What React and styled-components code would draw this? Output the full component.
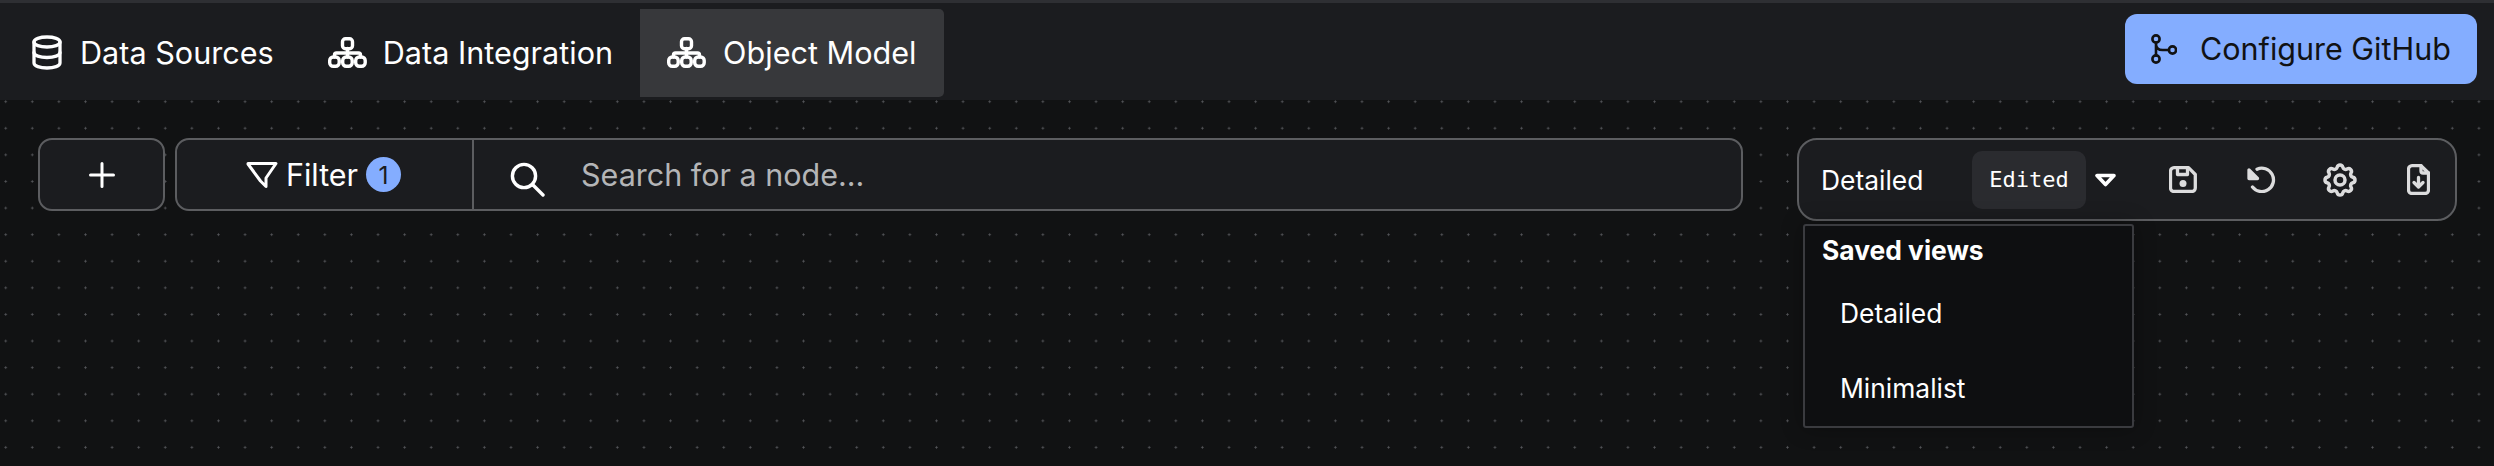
import React from 'react';
import styled, { createGlobalStyle } from 'styled-components';
import { TbSettings } from 'react-icons/tb';

const GlobalStyle = createGlobalStyle`
  html, body {
    margin: 0;
    padding: 0;
    background: #111213;
  }
  * {
    box-sizing: border-box;
  }
`;

const Page = styled.div`
  width: 2494px;
  height: 466px;
  overflow: hidden;
  position: relative;
  display: flex;
  flex-direction: column;
  font-family: Inter, sans-serif;
  color: #fff;
  background-color: #111213;
  background-image: radial-gradient(circle at center, #55565a 0.9px, transparent 1.2px);
  background-size: 26.6px 26.6px;
  background-position: -7.6px 5.6px;
  border-top: 3px solid #2e2f33;
`;

const Header = styled.header`
  height: 97px;
  flex-shrink: 0;
  display: flex;
  justify-content: space-between;
  align-items: flex-start;
  padding: 6px 17px 0 5px;
  background: #1b1c1f;
`;

const Tabs = styled.nav`
  display: flex;
`;

const Tab = styled.div`
  height: 88px;
  display: flex;
  align-items: center;
  gap: ${(p) => p.$gap || 17}px;
  padding: 0 27px 1px;
  font-size: 30.6px;
  border-radius: 0 5px 5px 0;
  background: ${(p) => (p.$active ? '#37383b' : 'transparent')};
`;

const GitHubButton = styled.button`
  width: 352px;
  height: 70px;
  margin-top: 5px;
  display: flex;
  align-items: center;
  gap: 23px;
  padding: 0 0 1px 26px;
  border: none;
  border-radius: 12px;
  background: #84adff;
  color: #111213;
  font-family: inherit;
  font-size: 30.5px;
`;

const Toolbar = styled.div`
  display: flex;
  justify-content: space-between;
  padding: 38px 37px 0 38px;
`;

const LeftTools = styled.div`
  display: flex;
  gap: 10px;
  height: 73px;
`;

const AddButton = styled.div`
  width: 127px;
  display: flex;
  align-items: center;
  justify-content: center;
  background: #1b1c1f;
  border: 2px solid #5c5d60;
  border-radius: 14px;
`;

const SearchGroup = styled.div`
  width: 1568px;
  display: flex;
  background: #1b1c1f;
  border: 2px solid #5c5d60;
  border-radius: 14px;
`;

const FilterPart = styled.div`
  width: 297px;
  display: flex;
  align-items: center;
  justify-content: center;
  gap: 8px;
  padding-right: 2px;
  border-right: 2px solid #5c5d60;
  font-size: 30.5px;
`;

const Badge = styled.span`
  width: 35px;
  height: 35px;
  display: flex;
  align-items: center;
  justify-content: center;
  border-radius: 50%;
  background: #84adff;
  color: #1b1c1f;
  font-size: 24.6px;
`;

const SearchPart = styled.div`
  flex: 1;
  display: flex;
  align-items: center;
  gap: 36px;
  padding-left: 36px;
  color: #b4b5b7;
  font-size: 30.5px;
  svg {
    margin-top: 10px;
    color: #fff;
  }
`;

const ViewPanel = styled.div`
  width: 660px;
  height: 83px;
  position: relative;
  display: flex;
  align-items: center;
  padding-left: 22px;
  background: #1b1c1f;
  border: 2px solid #5c5d60;
  border-radius: 20px;
  font-size: 26.4px;
`;

const ViewName = styled.span`
  flex: 0 0 151px;
`;

const EditedTag = styled.span`
  flex: 0 0 114px;
  height: 58px;
  display: flex;
  align-items: center;
  justify-content: center;
  border-radius: 10px;
  background: #2a2b2f;
  font-family: 'DejaVu Sans Mono', monospace;
  font-size: 22px;
`;

const CaretBox = styled.span`
  flex: 0 0 39px;
  display: flex;
  justify-content: center;
`;

const IconRow = styled.div`
  display: flex;
  flex-shrink: 0;
  margin-left: 19px;
  color: #dcdcdd;
`;

const IconCell = styled.span`
  flex: 0 0 78.5px;
  display: flex;
  align-items: center;
  justify-content: center;
  svg.gear {
    width: 40px;
    height: 40px;
    stroke-width: 2.1;
  }
`;

const Dropdown = styled.div`
  position: absolute;
  top: 84px;
  left: 4px;
  width: 331px;
  height: 204px;
  padding: 6px 17px;
  background: #0e0f11;
  border: 2px solid #3a3b3f;
  border-radius: 3px;
  box-shadow: 0 0 22px rgba(0, 0, 0, 0.3);
`;

const DropdownLabel = styled.div`
  font-weight: 700;
  line-height: 36px;
  margin-bottom: 21px;
`;

const DropdownItem = styled.div`
  height: 75px;
  padding: 6px 18px;
  line-height: 36px;
`;

const Line = styled.svg`
  display: block;
  flex-shrink: 0;
  fill: none;
  stroke: currentColor;
  stroke-width: ${(p) => p.$weight || 3.3};
  stroke-linecap: round;
  stroke-linejoin: round;
`;

const DatabaseIcon = () => (
  <Line width="30" height="35" viewBox="0 0 30 35">
    <path d="M2 7c0-3 6-5 13-5s13 2 13 5-6 5-13 5S2 10 2 7" />
    <path d="M2 7v21c0 3 6 5 13 5s13-2 13-5V7" />
    <path d="M2 17.5c0 3 6 5 13 5s13-2 13-5" />
  </Line>
);

const SitemapIcon = () => (
  <Line width="39" height="31" viewBox="0 0 39 31" $weight={3.4}>
    <rect x="14.5" y="1.7" width="10" height="10" rx="3" />
    <rect x="1.7" y="20" width="9.5" height="9.3" rx="3.5" />
    <rect x="14.7" y="20" width="9.500" height="9.3" rx="3.5" />
    <rect x="27.7" y="20" width="9.500" height="9.3" rx="3.5" />
    <path d="M19.500 11.500V20M6.500 20v-2a2 2 0 0 1 2-2h22a2 2 0 0 1 2 2v2" />
  </Line>
);

const BranchIcon = () => (
  <Line width="26" height="30" viewBox="0 0 26 30" $weight={2.6}>
    <circle cx="5" cy="5" r="3.6" />
    <circle cx="5" cy="25" r="3.6" />
    <circle cx="21.5" cy="16" r="3.6" />
    <path d="M5 8.600v12.800M18 16h-6.500Q5 16 5 10" />
  </Line>
);

const PlusIcon = () => (
  <Line width="26" height="26" viewBox="0 0 26 26" $weight={3}>
    <path d="M13 1.500v23M1.500 13h23" />
  </Line>
);

const FilterIcon = () => (
  <Line width="32" height="28" viewBox="0 0 32 28" $weight={3}>
    <path d="M2 2.500h28L20 17v8.500l-5.500-5.500L2 3z" />
  </Line>
);

const SearchIcon = () => (
  <Line width="35" height="35" viewBox="0 0 35 35" $weight={3.4}>
    <circle cx="14" cy="14" r="11.600" />
    <path d="M23 23l10 10" />
  </Line>
);

const CaretIcon = () => (
  <Line width="23" height="14" viewBox="0 0 23 14" $weight={3.6}>
    <path d="M3 2.500h17l-8.500 9z" />
  </Line>
);

const SaveIcon = () => (
  <Line width="28" height="27" viewBox="0 0 28 27">
    <path d="M5 1.700h14.500L26.300 8.500V22a3.500 3.500 0 0 1-3.500 3.500H5A3.500 3.500 0 0 1 1.500 22V5.200A3.500 3.500 0 0 1 5 1.700" />
    <path d="M8.500 2v6.500h10V2" />
    <circle cx="14" cy="17.500" r="3.500" fill="currentColor" stroke="none" />
  </Line>
);

const RotateIcon = () => (
  <Line width="29" height="27" viewBox="0 0 29 27">
    <path d="M10 3.200A11.700 11.700 0 1 1 5.500 21" />
    <path d="M2 4v8.500h8.500z" fill="currentColor" />
  </Line>
);

const FileDownIcon = () => (
  <Line width="23" height="31" viewBox="0 0 23 31">
    <path d="M14 1.700H5A3.500 3.500 0 0 0 1.500 5.200V26A3.500 3.500 0 0 0 5 29.500h13a3.500 3.500 0 0 0 3.500-3.500V9z" />
    <path d="M14 1.700V7a2 2 0 0 0 2 2h5.500" />
    <path d="M11.500 13.500V23M7 18.500l4.500 4.500 4.500-4.500" />
  </Line>
);

const App = () => {
  return (
    <Page>
      <GlobalStyle />
      <Header>
        <Tabs>
          <Tab $gap={18}><DatabaseIcon />Data Sources</Tab>
          <Tab $gap={16}><SitemapIcon />Data Integration</Tab>
          <Tab $active><SitemapIcon />Object Model</Tab>
        </Tabs>
        <GitHubButton><BranchIcon />Configure GitHub</GitHubButton>
      </Header>

      <Toolbar>
        <LeftTools>
          <AddButton><PlusIcon /></AddButton>
          <SearchGroup>
            <FilterPart><FilterIcon />Filter<Badge>1</Badge></FilterPart>
            <SearchPart><SearchIcon />Search for a node...</SearchPart>
          </SearchGroup>
        </LeftTools>

        <ViewPanel>
          <ViewName>Detailed</ViewName>
          <EditedTag>Edited</EditedTag>
          <CaretBox><CaretIcon /></CaretBox>
          <IconRow>
            <IconCell><SaveIcon /></IconCell>
            <IconCell><RotateIcon /></IconCell>
            <IconCell><TbSettings className="gear" /></IconCell>
            <IconCell><FileDownIcon /></IconCell>
          </IconRow>
          <Dropdown>
            <DropdownLabel>Saved views</DropdownLabel>
            <DropdownItem>Detailed</DropdownItem>
            <DropdownItem>Minimalist</DropdownItem>
          </Dropdown>
        </ViewPanel>
      </Toolbar>
    </Page>
  );
};

export default App;
